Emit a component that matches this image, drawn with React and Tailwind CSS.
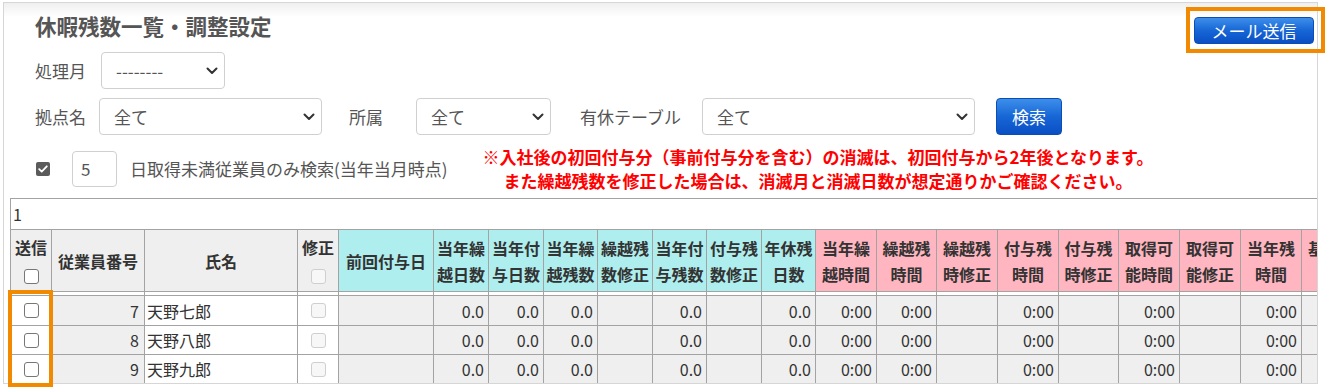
import React from "react";

const CELL = "border-r border-b border-[#a3a3a3]";

const columns = [
  { head: "送信", hb: "bg-[#efefef]", kind: "send" },
  { head: "従業員番号", hb: "bg-[#efefef]" },
  { head: "氏名", hb: "bg-[#efefef]" },
  { head: "修正", hb: "bg-[#efefef]", kind: "fix" },
  { head: "前回付与日", hb: "bg-[#afeeee]" },
  { head: ["当年繰", "越日数"], hb: "bg-[#afeeee]" },
  { head: ["当年付", "与日数"], hb: "bg-[#afeeee]" },
  { head: ["当年繰", "越残数"], hb: "bg-[#afeeee]" },
  { head: ["繰越残", "数修正"], hb: "bg-[#afeeee]" },
  { head: ["当年付", "与残数"], hb: "bg-[#afeeee]" },
  { head: ["付与残", "数修正"], hb: "bg-[#afeeee]" },
  { head: ["年休残", "日数"], hb: "bg-[#afeeee]" },
  { head: ["当年繰", "越時間"], hb: "bg-[#ffb6c1]" },
  { head: ["繰越残", "時間"], hb: "bg-[#ffb6c1]" },
  { head: ["繰越残", "時修正"], hb: "bg-[#ffb6c1]" },
  { head: ["付与残", "時間"], hb: "bg-[#ffb6c1]" },
  { head: ["付与残", "時修正"], hb: "bg-[#ffb6c1]" },
  { head: ["取得可", "能時間"], hb: "bg-[#ffb6c1]" },
  { head: ["取得可", "能修正"], hb: "bg-[#ffb6c1]" },
  { head: ["当年残", "時間"], hb: "bg-[#ffb6c1]" },
  { head: ["基準日", "数"], hb: "bg-[#ffb6c1]" },
];

const values = [
  "", "0.0", "0.0", "0.0", "", "0.0", "", "0.0",
  "0:00", "0:00", "", "0:00", "", "0:00", "", "0:00", "",
];

const rows = [
  { no: 7, name: "天野七郎", h: "h-[30px]" },
  { no: 8, name: "天野八郎", h: "h-[29px]" },
  { no: 9, name: "天野九郎", h: "h-[29px]" },
];

function Chevron() {
  return (
    <svg width="12" height="8" viewBox="0 0 12 8" className="shrink-0">
      <path d="M1.5 1.5l4.5 4.5 4.5-4.5" fill="none" stroke="#333" strokeWidth="2" strokeLinecap="round" strokeLinejoin="round" />
    </svg>
  );
}

function Select({ className, text }) {
  return (
    <div className={"flex h-[37px] shrink-0 items-center justify-between rounded-[4px] border border-[#d0d0d0] bg-white pl-[14px] pr-[6px] text-[#555] " + className}>
      <span>{text}</span>
      <Chevron />
    </div>
  );
}

function Box({ disabled }) {
  return (
    <div
      className={
        disabled
          ? "h-[15px] w-[15px] rounded-[3px] border border-[#cfcfcf] bg-[#f7f7f7]"
          : "h-[15px] w-[15px] rounded-[3px] border border-[#777] bg-white"
      }
    />
  );
}

function BlueButton({ className, children }) {
  return (
    <div className={"flex items-center justify-center rounded-[4px] border border-[#0b4db3] bg-[linear-gradient(to_bottom,#3d8fea,#1766d6_50%,#0a4fc4)] text-[17px] text-white " + className}>
      {children}
    </div>
  );
}

function HeaderCell({ col }) {
  if (col.kind) {
    return (
      <div className={CELL + " " + col.hb + " flex h-[62px] flex-col items-center pt-[4px] font-bold leading-[26px]"}>
        <span>{col.head}</span>
        <div className="mt-[9px]">
          <Box disabled={col.kind === "fix"} />
        </div>
      </div>
    );
  }
  const lines = Array.isArray(col.head) ? col.head : [col.head];
  return (
    <div className={CELL + " " + col.hb + " flex h-[62px] flex-col items-center justify-center whitespace-nowrap font-bold leading-[26px]"}>
      {lines.map((l, i) => (
        <span key={i}>{l}</span>
      ))}
    </div>
  );
}

export default function App() {
  return (
    <div className="relative h-[392px] w-[1325px] overflow-hidden bg-white font-['Noto_Sans_CJK_JP','Noto_Sans',sans-serif] text-[17px] text-[#555]">
      <div className="ml-[3px] mt-[2px] h-[382px] w-[1315px] overflow-hidden border border-[#d6d6d6] bg-[linear-gradient(to_bottom,#efefef,#ffffff_14px)]">
        {/* title row */}
        <div className="flex h-[46px] items-start justify-between">
          <h1 className="ml-[31px] mt-[8px] text-[21.5px] font-bold leading-[30px] text-[#555]">休暇残数一覧・調整設定</h1>
          <BlueButton className="mr-[3px] mt-[14px] h-[27px] w-[120px]">メール送信</BlueButton>
        </div>

        {/* row 1 */}
        <div className="mt-[3px] flex h-[37px] items-center pl-[31px]">
          <span>処理月</span>
          <Select className="ml-[15px] w-[124px]" text="--------" />
        </div>

        {/* row 2 */}
        <div className="mt-[9px] flex h-[37px] items-center pl-[31px]">
          <span>拠点名</span>
          <Select className="ml-[13px] w-[223px]" text="全て" />
          <span className="ml-[27px]">所属</span>
          <Select className="ml-[33px] w-[135px]" text="全て" />
          <span className="ml-[29px]">有休テーブル</span>
          <Select className="ml-[21px] w-[273px]" text="全て" />
          <BlueButton className="ml-[21px] h-[37px] w-[66px]">検索</BlueButton>
        </div>

        {/* row 3 */}
        <div className="mt-[10px] flex h-[48px] items-center">
          <div className="flex w-[464px] shrink-0 items-center pl-[32px]">
            <div className="flex h-[14px] w-[14px] items-center justify-center rounded-[2px] bg-[#5b5b5b]">
              <svg width="10" height="8" viewBox="0 0 10 8">
                <path d="M1.2 4.2l2.5 2.4L8.8 1.3" fill="none" stroke="#fff" strokeWidth="1.8" strokeLinecap="round" strokeLinejoin="round" />
              </svg>
            </div>
            <div className="ml-[22px] flex h-[36px] w-[45px] items-center rounded-[4px] border border-[#d0d0d0] bg-white pl-[8px]">5</div>
            <span className="ml-[13px] whitespace-nowrap">日取得未満従業員のみ検索(当年当月時点)</span>
          </div>
          <div className="w-[700px] shrink-0 text-center text-[17px] font-bold leading-[24px] text-[#ff0000]">
            <p>※入社後の初回付与分（事前付与分を含む）の消滅は、初回付与から2年後となります。</p>
            <p>また繰越残数を修正した場合は、消滅月と消滅日数が想定通りかご確認ください。</p>
          </div>
        </div>

        {/* table */}
        <div className="ml-[6px] mt-[5px] overflow-hidden border-l border-[#a3a3a3] text-[16px] text-[#333]">
          <div className="flex h-[32px] items-center border-y border-[#a3a3a3] bg-white pl-[2px]">1</div>
          <div className="grid w-[1352px] grid-cols-[41px_93px_153px_41px_95px_55px_55px_54px_55px_54px_55px_54px_61px_60px_61px_61px_60px_61px_61px_61px_61px]">
            {columns.map((c, i) => (
              <HeaderCell key={"h" + i} col={c} />
            ))}
            {columns.map((c, i) => (
              <div key={"s" + i} className={CELL + " h-[4px] bg-white"} />
            ))}
            {rows.map((r) => (
              <React.Fragment key={r.no}>
                <div className={CELL + " " + r.h + " flex items-center justify-center bg-white"}>
                  <Box />
                </div>
                <div className={CELL + " " + r.h + " flex items-center justify-end bg-[#efefef] pr-[5px]"}>{r.no}</div>
                <div className={CELL + " " + r.h + " flex items-center bg-white pl-[2px]"}>{r.name}</div>
                <div className={CELL + " " + r.h + " flex items-center justify-center bg-white"}>
                  <Box disabled />
                </div>
                {values.map((v, j) => (
                  <div key={j} className={CELL + " " + r.h + " flex items-center justify-end bg-[#efefef] pr-[4px]"}>
                    {v}
                  </div>
                ))}
              </React.Fragment>
            ))}
          </div>
        </div>
      </div>

      {/* annotation overlays */}
      <div className="pointer-events-none absolute left-[1186px] top-[7px] h-[46px] w-[139px] border-4 border-[#f18a00]" />
      <div className="pointer-events-none absolute left-[8px] top-[290px] h-[97px] w-[45px] border-4 border-[#f18a00]" />
    </div>
  );
}
